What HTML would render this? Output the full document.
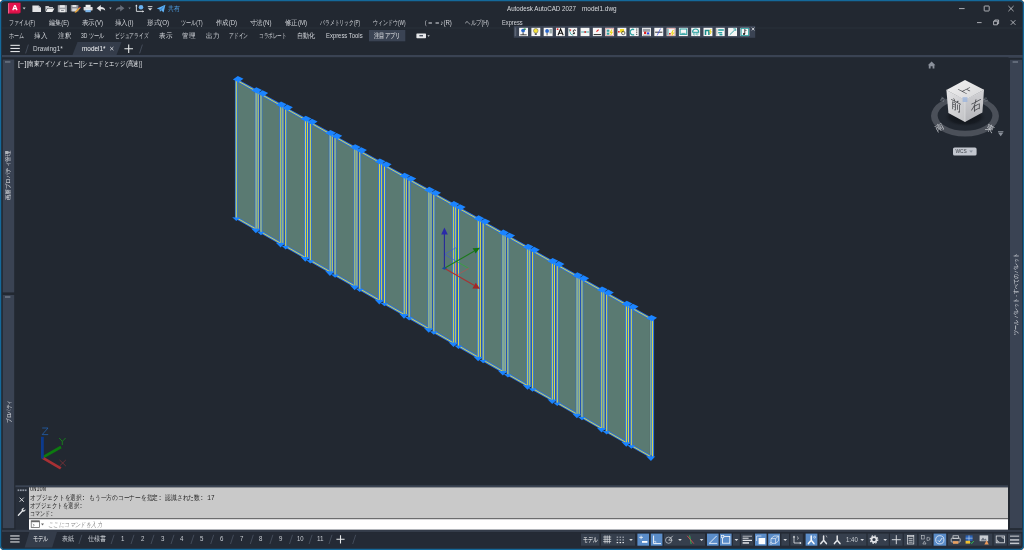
<!DOCTYPE html>
<html lang="ja"><head><meta charset="utf-8"><title>Autodesk AutoCAD 2027 - model1.dwg</title>
<style>
html,body{margin:0;padding:0;background:#fff;}
body{width:1024px;height:550px;position:relative;overflow:hidden;font-family:"Liberation Sans",sans-serif;}
#win{-webkit-font-smoothing:antialiased;position:absolute;left:0;top:0;width:1024px;height:550px;background:#222831;border-radius:4px;overflow:hidden;}
svg{position:absolute;left:0;top:0;}
#txt{position:absolute;left:0;top:0;width:1024px;height:550px;will-change:transform;}
.t{position:absolute;white-space:nowrap;color:#d4d7dc;font-size:6.6px;line-height:10px;height:10px;transform-origin:0 50%;}
#hist{position:absolute;left:29px;top:487.4px;width:979px;height:31px;overflow:hidden;}
.h{position:absolute;left:0.6px;white-space:pre;color:#1c1c1c;font-family:"Liberation Mono",monospace;font-size:7.4px;line-height:8.3px;height:8.3px;transform-origin:0 50%;}
.v{position:absolute;white-space:nowrap;color:#e4e6ea;font-size:6px;line-height:8px;height:8px;transform-origin:0 0;}
.c{position:absolute;white-space:nowrap;color:#3b3d42;font-size:9px;line-height:10px;height:10px;width:10px;text-align:center;transform-origin:50% 50%;}
</style></head><body><div id="win">

<svg width="1024" height="550" viewBox="0 0 1024 550">
<rect x="2" y="27.6" width="1020" height="0.8" fill="#2b323e"/>
<rect x="369" y="30" width="36.3" height="11.3" fill="#3a4353"/>
<polygon points="72.5,55 77.5,42 121.5,42 116.5,55" fill="#343c4a"/>
<line x1="25.6" y1="53.4" x2="28.4" y2="44.6" stroke="#4a5362" stroke-width="0.8"/>
<line x1="139.6" y1="53.4" x2="142.4" y2="44.6" stroke="#4a5362" stroke-width="0.8"/>
<rect x="2" y="55" width="1020.6" height="2.2" fill="#3a4353"/>
<rect x="1008.5" y="57" width="14" height="1" fill="#343c4a"/>
<rect x="2.8" y="59.6" width="11.4" height="232.8" fill="#3a4353"/>
<rect x="2.8" y="295" width="11.4" height="233.2" fill="#3a4353"/>
<rect x="5" y="61.2" width="5.4" height="1.5" fill="#6b7483"/>
<rect x="5" y="296.2" width="5.4" height="1.6" fill="#6b7483"/>
<rect x="1010" y="59.8" width="12" height="468.4" fill="#3a4353"/>
<rect x="1012.6" y="61.2" width="5.4" height="1.6" fill="#6b7483"/>
<rect x="15.4" y="485.3" width="992.6" height="2.2" fill="#3a4353"/>
<rect x="15.4" y="487.4" width="13.7" height="42.6" fill="#272e39"/>
<rect x="29" y="487.4" width="979" height="31" fill="#c9c9c9"/>
<rect x="29" y="518.3" width="979" height="1" fill="#6e6e6e"/>
<rect x="29" y="519.2" width="979" height="10.6" fill="#ffffff"/>
<rect x="2" y="529.8" width="1020.6" height="2.3" fill="#343c4a"/>
<rect x="2" y="532.1" width="1020.6" height="17" fill="#242a35"/>
<polygon points="24.6,547.4 29.4,532.1 57,532.1 52.2,547.4" fill="#343c4a"/>
<line x1="78.9" y1="544" x2="81.9" y2="534.8" stroke="#4a5362" stroke-width="0.8"/>
<line x1="111.1" y1="544" x2="114.1" y2="534.8" stroke="#4a5362" stroke-width="0.8"/>
<line x1="131" y1="544" x2="134" y2="534.8" stroke="#4a5362" stroke-width="0.8"/>
<line x1="151" y1="544" x2="154" y2="534.8" stroke="#4a5362" stroke-width="0.8"/>
<line x1="171" y1="544" x2="174" y2="534.8" stroke="#4a5362" stroke-width="0.8"/>
<line x1="190.9" y1="544" x2="193.9" y2="534.8" stroke="#4a5362" stroke-width="0.8"/>
<line x1="210.7" y1="544" x2="213.7" y2="534.8" stroke="#4a5362" stroke-width="0.8"/>
<line x1="230.5" y1="544" x2="233.5" y2="534.8" stroke="#4a5362" stroke-width="0.8"/>
<line x1="250.3" y1="544" x2="253.3" y2="534.8" stroke="#4a5362" stroke-width="0.8"/>
<line x1="269.9" y1="544" x2="272.9" y2="534.8" stroke="#4a5362" stroke-width="0.8"/>
<line x1="289.5" y1="544" x2="292.5" y2="534.8" stroke="#4a5362" stroke-width="0.8"/>
<line x1="309.1" y1="544" x2="312.1" y2="534.8" stroke="#4a5362" stroke-width="0.8"/>
<line x1="329" y1="544" x2="332" y2="534.8" stroke="#4a5362" stroke-width="0.8"/>
<line x1="352.7" y1="544" x2="355.7" y2="534.8" stroke="#4a5362" stroke-width="0.8"/>
</svg>
<svg width="1024" height="550" viewBox="0 0 1024 550">
<polygon points="236.30,80.50 254.80,91.17 254.80,228.47 236.30,217.80" fill="#5a7a72"/>
<polygon points="254.80,91.17 257.10,89.77 257.10,227.07 254.80,228.47" fill="#80a69d"/>
<polygon points="260.99,94.74 279.49,105.41 279.49,242.71 260.99,232.04" fill="#5a7a72"/>
<polygon points="279.49,105.41 281.79,104.01 281.79,241.31 279.49,242.71" fill="#80a69d"/>
<polygon points="285.68,108.98 304.18,119.65 304.18,256.95 285.68,246.28" fill="#5a7a72"/>
<polygon points="304.18,119.65 306.48,118.25 306.48,255.55 304.18,256.95" fill="#80a69d"/>
<polygon points="310.37,123.22 328.87,133.89 328.87,271.19 310.37,260.52" fill="#5a7a72"/>
<polygon points="328.87,133.89 331.17,132.49 331.17,269.79 328.87,271.19" fill="#80a69d"/>
<polygon points="335.06,137.45 353.56,148.12 353.56,285.42 335.06,274.75" fill="#5a7a72"/>
<polygon points="353.56,148.12 355.86,146.72 355.86,284.02 353.56,285.42" fill="#80a69d"/>
<polygon points="359.75,151.69 378.25,162.36 378.25,299.66 359.75,288.99" fill="#5a7a72"/>
<polygon points="378.25,162.36 380.55,160.96 380.55,298.26 378.25,299.66" fill="#80a69d"/>
<polygon points="384.44,165.93 402.94,176.60 402.94,313.90 384.44,303.23" fill="#5a7a72"/>
<polygon points="402.94,176.60 405.24,175.20 405.24,312.50 402.94,313.90" fill="#80a69d"/>
<polygon points="409.13,180.17 427.63,190.84 427.63,328.14 409.13,317.47" fill="#5a7a72"/>
<polygon points="427.63,190.84 429.93,189.44 429.93,326.74 427.63,328.14" fill="#80a69d"/>
<polygon points="433.82,194.41 452.32,205.08 452.32,342.38 433.82,331.71" fill="#5a7a72"/>
<polygon points="452.32,205.08 454.62,203.68 454.62,340.98 452.32,342.38" fill="#80a69d"/>
<polygon points="458.51,208.65 477.01,219.32 477.01,356.62 458.51,345.95" fill="#5a7a72"/>
<polygon points="477.01,219.32 479.31,217.92 479.31,355.22 477.01,356.62" fill="#80a69d"/>
<polygon points="483.20,222.89 501.70,233.56 501.70,370.86 483.20,360.19" fill="#5a7a72"/>
<polygon points="501.70,233.56 504.00,232.16 504.00,369.46 501.70,370.86" fill="#80a69d"/>
<polygon points="507.89,237.13 526.39,247.79 526.39,385.09 507.89,374.43" fill="#5a7a72"/>
<polygon points="526.39,247.79 528.69,246.39 528.69,383.69 526.39,385.09" fill="#80a69d"/>
<polygon points="532.58,251.36 551.08,262.03 551.08,399.33 532.58,388.66" fill="#5a7a72"/>
<polygon points="551.08,262.03 553.38,260.63 553.38,397.93 551.08,399.33" fill="#80a69d"/>
<polygon points="557.27,265.60 575.77,276.27 575.77,413.57 557.27,402.90" fill="#5a7a72"/>
<polygon points="575.77,276.27 578.07,274.87 578.07,412.17 575.77,413.57" fill="#80a69d"/>
<polygon points="581.96,279.84 600.46,290.51 600.46,427.81 581.96,417.14" fill="#5a7a72"/>
<polygon points="600.46,290.51 602.76,289.11 602.76,426.41 600.46,427.81" fill="#80a69d"/>
<polygon points="606.65,294.08 625.15,304.75 625.15,442.05 606.65,431.38" fill="#5a7a72"/>
<polygon points="625.15,304.75 627.45,303.35 627.45,440.65 625.15,442.05" fill="#80a69d"/>
<polygon points="631.34,308.32 649.84,318.99 649.84,456.29 631.34,445.62" fill="#5a7a72"/>
<polygon points="649.84,318.99 652.14,317.59 652.14,454.89 649.84,456.29" fill="#80a69d"/>
<g stroke="#2c74e6" stroke-width="2.7" fill="none" stroke-linecap="butt">
<path d="M236.00 79.90L257.10 91.50M236.00 217.60L255.30 228.57"/>
<path d="M236.30 80.00V218.40"/>
<path d="M256.10 90.57V229.67"/>
<path d="M258.20 91.47V230.47"/>
<path d="M260.69 94.14L281.79 105.73M260.69 231.84L279.99 242.81"/>
<path d="M260.99 94.24V232.64"/>
<path d="M280.79 104.81V243.91"/>
<path d="M282.89 105.71V244.71"/>
<path d="M285.38 108.38L306.48 119.97M285.38 246.08L304.68 257.05"/>
<path d="M285.68 108.48V246.88"/>
<path d="M305.48 119.05V258.15"/>
<path d="M307.58 119.95V258.95"/>
<path d="M310.07 122.62L331.17 134.21M310.07 260.32L329.37 271.29"/>
<path d="M310.37 122.72V261.12"/>
<path d="M330.17 133.29V272.39"/>
<path d="M332.27 134.19V273.19"/>
<path d="M334.76 136.85L355.86 148.45M334.76 274.55L354.06 285.52"/>
<path d="M335.06 136.95V275.35"/>
<path d="M354.86 147.52V286.62"/>
<path d="M356.96 148.42V287.42"/>
<path d="M359.45 151.09L380.55 162.69M359.45 288.79L378.75 299.76"/>
<path d="M359.75 151.19V289.59"/>
<path d="M379.55 161.76V300.86"/>
<path d="M381.65 162.66V301.66"/>
<path d="M384.14 165.33L405.24 176.93M384.14 303.03L403.44 314.00"/>
<path d="M384.44 165.43V303.83"/>
<path d="M404.24 176.00V315.10"/>
<path d="M406.34 176.90V315.90"/>
<path d="M408.83 179.57L429.93 191.17M408.83 317.27L428.13 328.24"/>
<path d="M409.13 179.67V318.07"/>
<path d="M428.93 190.24V329.34"/>
<path d="M431.03 191.14V330.14"/>
<path d="M433.52 193.81L454.62 205.41M433.52 331.51L452.82 342.48"/>
<path d="M433.82 193.91V332.31"/>
<path d="M453.62 204.48V343.58"/>
<path d="M455.72 205.38V344.38"/>
<path d="M458.21 208.05L479.31 219.64M458.21 345.75L477.51 356.72"/>
<path d="M458.51 208.15V346.55"/>
<path d="M478.31 218.72V357.82"/>
<path d="M480.41 219.62V358.62"/>
<path d="M482.90 222.29L504.00 233.88M482.90 359.99L502.20 370.96"/>
<path d="M483.20 222.39V360.79"/>
<path d="M503.00 232.96V372.06"/>
<path d="M505.10 233.86V372.86"/>
<path d="M507.59 236.53L528.69 248.12M507.59 374.23L526.89 385.19"/>
<path d="M507.89 236.63V375.03"/>
<path d="M527.69 247.19V386.29"/>
<path d="M529.79 248.09V387.09"/>
<path d="M532.28 250.76L553.38 262.36M532.28 388.46L551.58 399.43"/>
<path d="M532.58 250.86V389.26"/>
<path d="M552.38 261.43V400.53"/>
<path d="M554.48 262.33V401.33"/>
<path d="M556.97 265.00L578.07 276.60M556.97 402.70L576.27 413.67"/>
<path d="M557.27 265.10V403.50"/>
<path d="M577.07 275.67V414.77"/>
<path d="M579.17 276.57V415.57"/>
<path d="M581.66 279.24L602.76 290.84M581.66 416.94L600.96 427.91"/>
<path d="M581.96 279.34V417.74"/>
<path d="M601.76 289.91V429.01"/>
<path d="M603.86 290.81V429.81"/>
<path d="M606.35 293.48L627.45 305.08M606.35 431.18L625.65 442.15"/>
<path d="M606.65 293.58V431.98"/>
<path d="M626.45 304.15V443.25"/>
<path d="M628.55 305.05V444.05"/>
<path d="M631.04 307.72L652.14 319.31M631.04 445.42L650.34 456.39"/>
<path d="M631.34 307.82V446.22"/>
<path d="M652.74 319.31V457.01"/>
</g>
<g stroke="#2450b8" stroke-width="0.9" fill="none">
<path d="M259.40 93.37V230.47"/>
<path d="M284.09 107.61V244.71"/>
<path d="M308.78 121.85V258.95"/>
<path d="M333.47 136.09V273.19"/>
<path d="M358.16 150.32V287.42"/>
<path d="M382.85 164.56V301.66"/>
<path d="M407.54 178.80V315.90"/>
<path d="M432.23 193.04V330.14"/>
<path d="M456.92 207.28V344.38"/>
<path d="M481.61 221.52V358.62"/>
<path d="M506.30 235.76V372.86"/>
<path d="M530.99 249.99V387.09"/>
<path d="M555.68 264.23V401.33"/>
<path d="M580.37 278.47V415.57"/>
<path d="M605.06 292.71V429.81"/>
<path d="M629.75 306.95V444.05"/>
</g>
<g stroke="#d8da48" stroke-width="1.0" fill="none">
<path d="M236.30 80.00L256.60 91.50M236.30 217.70L255.40 228.67"/>
<path d="M236.30 80.80V217.80"/>
<path d="M256.10 91.77V229.27"/>
<path d="M258.20 92.57V230.27"/>
<path d="M260.99 94.24L281.29 105.73M260.99 231.94L280.09 242.91"/>
<path d="M260.99 95.04V232.04"/>
<path d="M280.79 106.01V243.51"/>
<path d="M282.89 106.81V244.51"/>
<path d="M285.68 108.48L305.98 119.97M285.68 246.18L304.78 257.15"/>
<path d="M285.68 109.28V246.28"/>
<path d="M305.48 120.25V257.75"/>
<path d="M307.58 121.05V258.75"/>
<path d="M310.37 122.72L330.67 134.21M310.37 260.42L329.47 271.39"/>
<path d="M310.37 123.52V260.52"/>
<path d="M330.17 134.49V271.99"/>
<path d="M332.27 135.29V272.99"/>
<path d="M335.06 136.95L355.36 148.45M335.06 274.65L354.16 285.62"/>
<path d="M335.06 137.75V274.75"/>
<path d="M354.86 148.72V286.22"/>
<path d="M356.96 149.52V287.22"/>
<path d="M359.75 151.19L380.05 162.69M359.75 288.89L378.85 299.86"/>
<path d="M359.75 151.99V288.99"/>
<path d="M379.55 162.96V300.46"/>
<path d="M381.65 163.76V301.46"/>
<path d="M384.44 165.43L404.74 176.93M384.44 303.13L403.54 314.10"/>
<path d="M384.44 166.23V303.23"/>
<path d="M404.24 177.20V314.70"/>
<path d="M406.34 178.00V315.70"/>
<path d="M409.13 179.67L429.43 191.17M409.13 317.37L428.23 328.34"/>
<path d="M409.13 180.47V317.47"/>
<path d="M428.93 191.44V328.94"/>
<path d="M431.03 192.24V329.94"/>
<path d="M433.82 193.91L454.12 205.41M433.82 331.61L452.92 342.58"/>
<path d="M433.82 194.71V331.71"/>
<path d="M453.62 205.68V343.18"/>
<path d="M455.72 206.48V344.18"/>
<path d="M458.51 208.15L478.81 219.64M458.51 345.85L477.61 356.82"/>
<path d="M458.51 208.95V345.95"/>
<path d="M478.31 219.92V357.42"/>
<path d="M480.41 220.72V358.42"/>
<path d="M483.20 222.39L503.50 233.88M483.20 360.09L502.30 371.06"/>
<path d="M483.20 223.19V360.19"/>
<path d="M503.00 234.16V371.66"/>
<path d="M505.10 234.96V372.66"/>
<path d="M507.89 236.63L528.19 248.12M507.89 374.33L526.99 385.29"/>
<path d="M507.89 237.43V374.43"/>
<path d="M527.69 248.39V385.89"/>
<path d="M529.79 249.19V386.89"/>
<path d="M532.58 250.86L552.88 262.36M532.58 388.56L551.68 399.53"/>
<path d="M532.58 251.66V388.66"/>
<path d="M552.38 262.63V400.13"/>
<path d="M554.48 263.43V401.13"/>
<path d="M557.27 265.10L577.57 276.60M557.27 402.80L576.37 413.77"/>
<path d="M557.27 265.90V402.90"/>
<path d="M577.07 276.87V414.37"/>
<path d="M579.17 277.67V415.37"/>
<path d="M581.96 279.34L602.26 290.84M581.96 417.04L601.06 428.01"/>
<path d="M581.96 280.14V417.14"/>
<path d="M601.76 291.11V428.61"/>
<path d="M603.86 291.91V429.61"/>
<path d="M606.65 293.58L626.95 305.08M606.65 431.28L625.75 442.25"/>
<path d="M606.65 294.38V431.38"/>
<path d="M626.45 305.35V442.85"/>
<path d="M628.55 306.15V443.85"/>
<path d="M631.34 307.82L651.64 319.31M631.34 445.52L650.44 456.49"/>
<path d="M631.34 308.62V445.62"/>
<path d="M652.44 319.91V456.61"/>
</g>
<g fill="#1b84ff">
<polygon points="232.90,79.40 237.80,76.00 243.50,78.80 238.60,82.20"/>
<polygon points="251.40,90.60 256.30,87.20 262.00,90.00 257.10,93.40"/>
<polygon points="232.20,217.30 240.00,217.70 236.30,220.90"/>
<polygon points="251.20,228.40 260.20,228.80 255.90,233.20"/>
<polygon points="257.59,93.64 262.49,90.24 268.19,93.04 263.29,96.44"/>
<polygon points="276.09,104.83 280.99,101.43 286.69,104.23 281.79,107.63"/>
<polygon points="256.89,231.54 264.69,231.94 260.99,235.14"/>
<polygon points="275.89,242.63 284.89,243.03 280.59,247.43"/>
<polygon points="282.28,107.88 287.18,104.48 292.88,107.28 287.98,110.68"/>
<polygon points="300.78,119.07 305.68,115.67 311.38,118.47 306.48,121.87"/>
<polygon points="281.58,245.78 289.38,246.18 285.68,249.38"/>
<polygon points="300.58,256.87 309.58,257.27 305.28,261.67"/>
<polygon points="306.97,122.12 311.87,118.72 317.57,121.52 312.67,124.92"/>
<polygon points="325.47,133.31 330.37,129.91 336.07,132.71 331.17,136.11"/>
<polygon points="306.27,260.02 314.07,260.42 310.37,263.62"/>
<polygon points="325.27,271.11 334.27,271.51 329.97,275.91"/>
<polygon points="331.66,136.35 336.56,132.95 342.26,135.75 337.36,139.15"/>
<polygon points="350.16,147.55 355.06,144.15 360.76,146.95 355.86,150.35"/>
<polygon points="330.96,274.25 338.76,274.65 335.06,277.85"/>
<polygon points="349.96,285.35 358.96,285.75 354.66,290.15"/>
<polygon points="356.35,150.59 361.25,147.19 366.95,149.99 362.05,153.39"/>
<polygon points="374.85,161.79 379.75,158.39 385.45,161.19 380.55,164.59"/>
<polygon points="355.65,288.49 363.45,288.89 359.75,292.09"/>
<polygon points="374.65,299.59 383.65,299.99 379.35,304.39"/>
<polygon points="381.04,164.83 385.94,161.43 391.64,164.23 386.74,167.63"/>
<polygon points="399.54,176.03 404.44,172.63 410.14,175.43 405.24,178.83"/>
<polygon points="380.34,302.73 388.14,303.13 384.44,306.33"/>
<polygon points="399.34,313.83 408.34,314.23 404.04,318.63"/>
<polygon points="405.73,179.07 410.63,175.67 416.33,178.47 411.43,181.87"/>
<polygon points="424.23,190.27 429.13,186.87 434.83,189.67 429.93,193.07"/>
<polygon points="405.03,316.97 412.83,317.37 409.13,320.57"/>
<polygon points="424.03,328.07 433.03,328.47 428.73,332.87"/>
<polygon points="430.42,193.31 435.32,189.91 441.02,192.71 436.12,196.11"/>
<polygon points="448.92,204.51 453.82,201.11 459.52,203.91 454.62,207.31"/>
<polygon points="429.72,331.21 437.52,331.61 433.82,334.81"/>
<polygon points="448.72,342.31 457.72,342.71 453.42,347.11"/>
<polygon points="455.11,207.55 460.01,204.15 465.71,206.95 460.81,210.35"/>
<polygon points="473.61,218.74 478.51,215.34 484.21,218.14 479.31,221.54"/>
<polygon points="454.41,345.45 462.21,345.85 458.51,349.05"/>
<polygon points="473.41,356.54 482.41,356.94 478.11,361.34"/>
<polygon points="479.80,221.79 484.70,218.39 490.40,221.19 485.50,224.59"/>
<polygon points="498.30,232.98 503.20,229.58 508.90,232.38 504.00,235.78"/>
<polygon points="479.10,359.69 486.90,360.09 483.20,363.29"/>
<polygon points="498.10,370.78 507.10,371.18 502.80,375.58"/>
<polygon points="504.49,236.03 509.39,232.63 515.09,235.43 510.19,238.83"/>
<polygon points="522.99,247.22 527.89,243.82 533.59,246.62 528.69,250.02"/>
<polygon points="503.79,373.93 511.59,374.33 507.89,377.53"/>
<polygon points="522.79,385.02 531.79,385.42 527.49,389.82"/>
<polygon points="529.18,250.26 534.08,246.86 539.78,249.66 534.88,253.06"/>
<polygon points="547.68,261.46 552.58,258.06 558.28,260.86 553.38,264.26"/>
<polygon points="528.48,388.16 536.28,388.56 532.58,391.76"/>
<polygon points="547.48,399.26 556.48,399.66 552.18,404.06"/>
<polygon points="553.87,264.50 558.77,261.10 564.47,263.90 559.57,267.30"/>
<polygon points="572.37,275.70 577.27,272.30 582.97,275.10 578.07,278.50"/>
<polygon points="553.17,402.40 560.97,402.80 557.27,406.00"/>
<polygon points="572.17,413.50 581.17,413.90 576.87,418.30"/>
<polygon points="578.56,278.74 583.46,275.34 589.16,278.14 584.26,281.54"/>
<polygon points="597.06,289.94 601.96,286.54 607.66,289.34 602.76,292.74"/>
<polygon points="577.86,416.64 585.66,417.04 581.96,420.24"/>
<polygon points="596.86,427.74 605.86,428.14 601.56,432.54"/>
<polygon points="603.25,292.98 608.15,289.58 613.85,292.38 608.95,295.78"/>
<polygon points="621.75,304.18 626.65,300.78 632.35,303.58 627.45,306.98"/>
<polygon points="602.55,430.88 610.35,431.28 606.65,434.48"/>
<polygon points="621.55,441.98 630.55,442.38 626.25,446.78"/>
<polygon points="627.94,307.22 632.84,303.82 638.54,306.62 633.64,310.02"/>
<polygon points="646.44,318.41 651.34,315.01 657.04,317.81 652.14,321.21"/>
<polygon points="627.24,445.12 635.04,445.52 631.34,448.72"/>
<polygon points="646.24,456.21 655.24,456.61 650.94,461.01"/>
</g>
</svg>
<svg width="1024" height="550" viewBox="0 0 1024 550">
<path d="M456.3 247.4L444.6 254.3L456.3 261.3" stroke="#3c55d8" stroke-width="0.6" fill="none"/>
<path d="M456.3 248V261.3L468.8 268.4" stroke="#25b525" stroke-width="0.6" fill="none"/>
<path d="M456.3 261.3V275M468.8 268.4L456.8 275.2" stroke="#c84848" stroke-width="0.6" fill="none"/>
<line x1="444.4" y1="268.3" x2="444.4" y2="234" stroke="#27279a" stroke-width="1.1"/>
<polygon points="444.4,227.6 441.2,234.6 447.8,234.6" fill="#2a2aa8"/>
<line x1="444.4" y1="268.3" x2="474" y2="251.3" stroke="#1c7a1c" stroke-width="1.1"/>
<polygon points="480,247.8 472.6,248.2 475.6,253.6" fill="#167016"/>
<line x1="444.4" y1="268.3" x2="474" y2="285.3" stroke="#a83232" stroke-width="1.1"/>
<polygon points="480,288.8 475.8,282.8 472.4,288.4" fill="#a02828"/>
<polygon points="441.8,268.3 444.4,266.9 447,268.3 444.4,269.8" fill="#1a4a9e"/>
</svg>
<svg width="1024" height="550" viewBox="0 0 1024 550">
<g stroke-width="2.8" stroke-linecap="butt">
<line x1="42.4" y1="457.6" x2="61" y2="447" stroke="#0d7a10"/>
<line x1="42.4" y1="457.6" x2="60.8" y2="468.4" stroke="#a83034"/>
<line x1="42.4" y1="458.6" x2="42.4" y2="436.8" stroke="#0c3a8c"/>
</g>
<g fill="none" stroke-width="0.7">
<path d="M42.2 428H48L42.2 434.6H48.2" stroke="#2268c0"/>
<path d="M59.2 438L62.3 441.4L65.6 438M62.3 441.4V445" stroke="#14a014"/>
<path d="M59.6 460L65.8 466M65.8 460L59.6 466" stroke="#8a3236"/>
</g></svg>
<svg width="1024" height="550" viewBox="0 0 1024 550">
<defs><radialGradient id="shd" cx="0.5" cy="0.5" r="0.5"><stop offset="0" stop-color="#0c0f14" stop-opacity="0.95"/><stop offset="0.7" stop-color="#12161c" stop-opacity="0.7"/><stop offset="1" stop-color="#222831" stop-opacity="0"/></radialGradient><linearGradient id="ctop" x1="0" y1="0" x2="1" y2="1"><stop offset="0" stop-color="#f2f2f2"/><stop offset="1" stop-color="#d6d6d8"/></linearGradient><linearGradient id="cl" x1="0" y1="0" x2="1" y2="1"><stop offset="0" stop-color="#e4e4e6"/><stop offset="1" stop-color="#c2c3c6"/></linearGradient><linearGradient id="cr" x1="0" y1="0" x2="0" y2="1"><stop offset="0" stop-color="#d2d2d5"/><stop offset="1" stop-color="#b4b5b9"/></linearGradient></defs>
<path d="M927.8 65.2L931.6 61.4L935.4 65.2H934.4V68.6H932.6V66.2H930.6V68.6H928.8V65.2Z" fill="#8b919b"/>
<path fill-rule="evenodd" fill="#4b5059" d="M931 116a34 20.5 0 1 0 68 0a34 20.5 0 1 0 -68 0ZM937.6 115.6a27.4 15.2 0 1 0 54.8 0a27.4 15.2 0 1 0 -54.8 0Z"/>
<ellipse cx="965" cy="117" rx="22" ry="10" fill="url(#shd)"/>
<polygon points="965,80 984,89.8 965,100 946.4,90" fill="url(#ctop)"/>
<polygon points="946.4,90 965,100 965,122 948.4,113" fill="url(#cl)"/>
<polygon points="984,89.8 965,100 965,122 982.4,112.6" fill="url(#cr)"/>
<path d="M965 100V122M946.4 90L965 100L984 89.8" stroke="#f4f4f4" stroke-width="0.5" fill="none" opacity="0.8"/>
<rect x="962.6" y="97.2" width="4.8" height="4.8" fill="#9fb6dc" opacity="0.85"/>
<path d="M998 132.6H1003.4L1000.7 136.2Z" fill="#8b919b"/><rect x="998" y="131" width="5.4" height="0.8" fill="#8b919b"/>
<rect x="953" y="147.4" width="23.6" height="8.2" rx="1.6" fill="#c3c7cf"/>
<path d="M969.2 150.4H973L971.1 152.8Z" fill="#8e95a1"/>
</svg>
<svg width="1024" height="550" viewBox="0 0 1024 550">
<g stroke="#d8dadf" stroke-width="0.75" fill="none">
<path d="M959 8.6H964.6"/>
<rect x="984.2" y="6" width="5" height="5" rx="0.6"/>
<path d="M1008.4 6L1013.6 11.2M1013.6 6L1008.4 11.2"/>
<path d="M977 22.6H981.6"/>
<path d="M993.6 21.2H997.4V24.8H993.6ZM994.8 21.2V20H998.6V23.6H997.4"/>
<path d="M1010.8 20.2L1015.4 24.8M1015.4 20.2L1010.8 24.8"/>
</g></svg>
<svg width="1024" height="550" viewBox="0 0 1024 550">
<path d="M8 3.6L9.4 2.8H20.4V12.6L19 13.8H8Z" fill="#b3123f"/>
<rect x="9.2" y="2.8" width="11.2" height="9.9" fill="#e4134d"/>
<path d="M8 3.6L9.2 2.8V12.7L8 13.8Z" fill="#f2608a"/>
<path d="M12.8 10.2L14.5 5.6H15.3L17 10.2M13.5 8.7H16.3" stroke="#fff" stroke-width="1.25" fill="none" stroke-linejoin="round"/>
<path d="M22.6 7.4H25.6L24.1 9.4Z" fill="#c8ccd2"/>
<path d="M32.4 5.4H38.6L41 7.8V11.9H32.4Z" fill="#e2e3e5"/><path d="M38.6 5.4V7.8H41Z" fill="#9a9ea6"/>
<path d="M45.4 6H48.6L49.4 7H53V8.2H47.2L45.4 11.4Z" fill="#c9cbcf"/><path d="M47.6 8.6H54.4L52.4 11.9H45.6Z" fill="#eceded"/>
<rect x="57.8" y="5.2" width="9.2" height="7" fill="#a2a5ab"/><rect x="59.8" y="5.2" width="5" height="2.4" fill="#e8e9eb"/><rect x="59.6" y="9.2" width="5.6" height="3" fill="#e8e9eb"/><rect x="61" y="10" width="2.8" height="1" fill="#8a8d93"/>
<rect x="70.8" y="5" width="7.6" height="6.4" fill="#8e9198"/><rect x="72.4" y="5" width="4" height="2" fill="#e0e1e4"/><rect x="72.2" y="8.4" width="4.6" height="3" fill="#d6d7da"/><path d="M75 11.4L79 7.4L80.2 8.6L76.2 12.6L74.6 12.8Z" fill="#e8a53a"/><path d="M79 7.4L79.8 6.6L81 7.8L80.2 8.6Z" fill="#d8434a"/>
<rect x="85.6" y="4.8" width="5" height="2.4" fill="#f0f0f1"/><rect x="83.6" y="7" width="9" height="3.4" rx="0.6" fill="#dcdde0"/><rect x="85.4" y="9.2" width="5.4" height="3" fill="#7cb6ea"/><rect x="85.4" y="9.2" width="5.4" height="0.8" fill="#f4f4f4"/>
<path d="M96.6 8.2L100.8 5V7.1C103.6 7.1 105.2 8.4 105.2 10.8C104.2 9.6 103 9.3 100.8 9.3V11.4Z" fill="#e4e5e8"/>
<path d="M109.2 7.6H111.6L110.4 9.2Z" fill="#aeb3bb"/>
<path d="M124.4 8.2L120.2 5V7.1C117.4 7.1 115.8 8.4 115.8 10.8C116.8 9.6 118 9.3 120.2 9.3V11.4Z" fill="#666d79"/>
<path d="M128.4 7.6H130.8L129.6 9.2Z" fill="#7b828d"/>
<path d="M136.4 5V11.4H143.4" stroke="#dfe1e4" stroke-width="0.9" fill="none"/><path d="M135.2 6.2L136.4 4.4L137.6 6.2ZM142.4 10.2L144.2 11.4L142.4 12.6Z" fill="#dfe1e4"/><circle cx="141" cy="7.2" r="2.3" fill="#69b1f0"/>
<rect x="147.8" y="6.2" width="4.6" height="0.9" fill="#dfe1e4"/><path d="M147.8 8.2H152.4L150.1 10.6Z" fill="#dfe1e4"/>
<path d="M156.8 8.6L165.4 4.8L163.6 12.4L161.2 10.2L160 12L159.6 9.6Z" fill="#5fb0f2"/><path d="M159.6 9.6L165.4 4.8L161.2 10.2" fill="#3c88d0"/>
<rect x="416.4" y="33.4" width="9.6" height="4.8" rx="0.6" fill="#e6e7ea"/><rect x="419.4" y="35" width="3.6" height="1.4" fill="#4b5361"/><path d="M427.4 35.2H429.8L428.6 36.8Z" fill="#c8ccd2"/>
<g fill="#e1e3e6"><rect x="10.4" y="44.8" width="9.4" height="1.1"/><rect x="10.4" y="47.9" width="9.4" height="1.1"/><rect x="10.4" y="51" width="9.4" height="1.1"/></g>
<path d="M110.2 47L113.4 50.2M113.4 47L110.2 50.2" stroke="#d0d3d8" stroke-width="0.95"/>
<path d="M124.4 48.7H133M128.7 44.4V53" stroke="#e8eaec" stroke-width="1.1"/>
</svg>
<svg width="1024" height="550" viewBox="0 0 1024 550">
<rect x="513.8" y="25.9" width="241.4" height="11.9" fill="#3a4353"/>
<rect x="514.6" y="27.4" width="1.6" height="8.8" fill="#5c6575"/>
<rect x="519.10" y="27.8" width="8.9" height="8.3" fill="#f6f6f6"/>
<rect x="531.39" y="27.8" width="8.9" height="8.3" fill="#f6f6f6"/>
<rect x="543.69" y="27.8" width="8.9" height="8.3" fill="#f6f6f6"/>
<rect x="555.98" y="27.8" width="8.9" height="8.3" fill="#f6f6f6"/>
<rect x="568.28" y="27.8" width="8.9" height="8.3" fill="#f6f6f6"/>
<rect x="580.57" y="27.8" width="8.9" height="8.3" fill="#f6f6f6"/>
<rect x="592.86" y="27.8" width="8.9" height="8.3" fill="#f6f6f6"/>
<rect x="605.16" y="27.8" width="8.9" height="8.3" fill="#f6f6f6"/>
<rect x="617.45" y="27.8" width="8.9" height="8.3" fill="#f6f6f6"/>
<rect x="629.75" y="27.8" width="8.9" height="8.3" fill="#f6f6f6"/>
<rect x="642.04" y="27.8" width="8.9" height="8.3" fill="#f6f6f6"/>
<rect x="654.33" y="27.8" width="8.9" height="8.3" fill="#f6f6f6"/>
<rect x="666.63" y="27.8" width="8.9" height="8.3" fill="#f6f6f6"/>
<rect x="678.92" y="27.8" width="8.9" height="8.3" fill="#f6f6f6"/>
<rect x="691.22" y="27.8" width="8.9" height="8.3" fill="#f6f6f6"/>
<rect x="703.51" y="27.8" width="8.9" height="8.3" fill="#f6f6f6"/>
<rect x="715.80" y="27.8" width="8.9" height="8.3" fill="#f6f6f6"/>
<rect x="728.10" y="27.8" width="8.9" height="8.3" fill="#f6f6f6"/>
<rect x="740.39" y="27.8" width="8.9" height="8.3" fill="#f6f6f6"/>
<circle cx="523.10" cy="30.6" r="1.9" fill="#2a66c8"/><path d="M523.10 32.4V35M520.30 34.8H526.70" stroke="#222" stroke-width="0.8"/><rect x="523.70" y="28.4" width="2" height="1.6" fill="#2e8b57"/>
<circle cx="535.79" cy="30.8" r="2.3" fill="#f4e23a" stroke="#555" stroke-width="0.5"/><rect x="534.79" y="33.2" width="2" height="1.8" fill="#555"/>
<circle cx="547.09" cy="31" r="1.9" fill="#2a66c8"/><path d="M547.09 33V35.4" stroke="#222" stroke-width="0.8"/><rect x="549.49" y="29" width="2.4" height="4.4" fill="#9aa"/>
<path d="M557.98 35.2L560.58 29L563.18 35.2M558.98 33.2H562.18" stroke="#111" stroke-width="1.1" fill="none"/><rect x="556.78" y="28.4" width="1.6" height="1.6" fill="#e02020"/>
<path d="M569.08 29L570.68 34L573.28 35.4" stroke="#2aa0a0" stroke-width="0.8" fill="none"/><path d="M575.68 30.4C573.88 29 572.48 31 573.68 32S575.08 34.6 572.88 33.4" stroke="#111" stroke-width="1" fill="none"/><rect x="569.68" y="29.4" width="1.4" height="1.4" fill="#e02020"/>
<path d="M581.17 32H588.97" stroke="#2aa0a0" stroke-width="0.9"/><rect x="584.37" y="31.2" width="1.6" height="1.6" fill="#e02020"/>
<path d="M593.66 34.6H601.06" stroke="#111" stroke-width="0.9"/><path d="M596.46 31.6L598.66 29.6" stroke="#e02020" stroke-width="1.2"/>
<rect x="605.86" y="28.6" width="7.6" height="6.8" fill="none" stroke="#d88a8a" stroke-width="0.6"/><rect x="606.76" y="29.6" width="2.6" height="2.2" fill="#3aa0a0"/><rect x="606.76" y="32.6" width="2.6" height="2.2" fill="#3aa0a0"/><path d="M611.96 29.4L610.36 32.4H612.16L610.56 35" stroke="#f0d820" stroke-width="1.1" fill="none"/>
<rect x="620.05" y="29" width="4" height="3.4" fill="#f0d820"/><circle cx="623.25" cy="33" r="1.7" fill="none" stroke="#333" stroke-width="0.7"/><rect x="618.05" y="31" width="1.6" height="1.6" fill="#e02020"/>
<path d="M634.15 29.6A2.8 2.8 0 1 0 634.15 34.6" stroke="#2aa0a0" stroke-width="1.3" fill="none"/><path d="M636.75 28.6V35.4" stroke="#333" stroke-width="1" stroke-dasharray="1 0.8"/>
<rect x="642.84" y="28.8" width="7.2" height="3" fill="#9aa0a8"/><rect x="644.04" y="31.6" width="2.2" height="2.4" fill="#e02020"/><rect x="647.04" y="32.4" width="2.2" height="2" fill="#2040e0"/><path d="M642.84 35.2H650.04" stroke="#888" stroke-width="0.8"/>
<path d="M655.13 32.2H662.33" stroke="#333" stroke-width="1"/><path d="M657.13 35.4L660.53 28.6" stroke="#3040e0" stroke-width="0.7"/>
<rect x="667.43" y="28.6" width="7.4" height="6.8" fill="none" stroke="#e09090" stroke-width="0.6"/><path d="M668.03 28.8V35.2" stroke="#2aa0a0" stroke-width="0.9"/><path d="M673.43 30L671.63 33H673.63L671.63 35.4" stroke="#f0d820" stroke-width="1.1" fill="none"/><rect x="669.03" y="33" width="1.6" height="1.6" fill="#e02020"/>
<rect x="680.12" y="29" width="6.6" height="5.4" fill="none" stroke="#2aa0a0" stroke-width="1"/><path d="M681.32 33.4H685.52" stroke="#2aa0a0" stroke-width="0.8"/>
<path d="M692.62 32A2.9 2.9 0 0 1 698.62 32" stroke="#2aa0a0" stroke-width="1.2" fill="none"/><rect x="692.22" y="31.8" width="7" height="1" fill="#2aa0a0"/><circle cx="694.22" cy="34" r="1" fill="none" stroke="#2aa0a0" stroke-width="0.6"/><circle cx="697.22" cy="34" r="1" fill="none" stroke="#2aa0a0" stroke-width="0.6"/>
<path d="M705.51 35V30.4H708.91V35" stroke="#1a8a8a" stroke-width="1.5" fill="none"/><path d="M711.11 29L709.71 31.6H711.31L710.11 34" stroke="#f0d820" stroke-width="1" fill="none"/>
<path d="M716.80 28.4V35.6" stroke="#999" stroke-width="0.8"/><rect x="718.20" y="29.2" width="5.6" height="1.6" fill="#2aa0a0"/><rect x="718.20" y="32" width="4" height="1.4" fill="#2aa0a0"/><rect x="719.40" y="34" width="3" height="1.4" fill="#2aa0a0"/>
<path d="M729.70 34.8L735.30 29.4" stroke="#2aa0a0" stroke-width="0.9"/><path d="M733.30 28.8H735.70V31" stroke="#2aa0a0" stroke-width="0.8" fill="none"/>
<rect x="741.19" y="28.4" width="7.4" height="7.2" fill="none" stroke="#2aa0a0" stroke-width="0.9"/><path d="M744.79 29.4V34M744.79 29.4L746.39 31" stroke="#111" stroke-width="0.8" fill="none"/><circle cx="743.99" cy="34" r="1" fill="#111"/>
<path d="M751.8 27.6L754.4 30.4M754.4 27.6L751.8 30.4" stroke="#e6e8ea" stroke-width="0.8"/>
</svg>
<svg width="1024" height="550" viewBox="0 0 1024 550">
<rect x="17.60" y="489.4" width="1.7" height="1.7" fill="#9097a3"/>
<rect x="20.00" y="489.4" width="1.7" height="1.7" fill="#9097a3"/>
<rect x="22.40" y="489.4" width="1.7" height="1.7" fill="#9097a3"/>
<rect x="24.80" y="489.4" width="1.7" height="1.7" fill="#9097a3"/>
<path d="M19.6 497.6L23.8 501.8M23.8 497.6L19.6 501.8" stroke="#e2e4e7" stroke-width="0.9"/>
<path d="M18.4 515.2L22.6 510.8" stroke="#e2e4e7" stroke-width="1.4" stroke-linecap="round"/><path d="M21.6 510.2C21.4 508.6 23 507.4 24.4 507.8L23 509.4L23.8 510.4L25.6 509.2C25.8 510.8 24.4 512 22.8 511.6Z" fill="#e2e4e7"/>
<rect x="31.2" y="520.8" width="8.2" height="6.6" fill="#fff" stroke="#555" stroke-width="0.7"/><rect x="31.2" y="520.8" width="8.2" height="1.4" fill="#666"/><path d="M32.8 524L34.4 525.2L32.8 526.4" stroke="#444" stroke-width="0.5" fill="none"/>
<path d="M41 523.6H44L42.5 525.4Z" fill="#666"/>
</svg>
<svg width="1024" height="550" viewBox="0 0 1024 550">
<rect x="581.00" y="533.60" width="18.40" height="12.10" fill="#363f4d"/>
<rect x="601.00" y="533.60" width="34.00" height="12.10" fill="#363f4d"/>
<rect x="664.00" y="533.60" width="41.00" height="12.10" fill="#363f4d"/>
<rect x="733.00" y="533.60" width="6.80" height="12.10" fill="#363f4d"/>
<rect x="741.00" y="533.60" width="12.40" height="12.10" fill="#363f4d"/>
<rect x="781.40" y="533.60" width="7.60" height="12.10" fill="#363f4d"/>
<rect x="790.40" y="533.60" width="12.40" height="12.10" fill="#363f4d"/>
<rect x="818.80" y="533.60" width="47.60" height="12.10" fill="#363f4d"/>
<rect x="867.60" y="533.60" width="21.20" height="12.10" fill="#363f4d"/>
<rect x="890.00" y="533.60" width="12.60" height="12.10" fill="#363f4d"/>
<rect x="903.80" y="533.60" width="13.40" height="12.10" fill="#363f4d"/>
<rect x="918.60" y="533.60" width="13.20" height="12.10" fill="#363f4d"/>
<rect x="947.80" y="533.60" width="44.60" height="12.10" fill="#363f4d"/>
<rect x="993.60" y="533.60" width="13.20" height="12.10" fill="#363f4d"/>
<rect x="1008.00" y="533.60" width="13.30" height="12.10" fill="#363f4d"/>
<rect x="637.40" y="533.60" width="11.60" height="12.10" fill="#5b8dc9"/>
<rect x="650.80" y="533.60" width="11.60" height="12.10" fill="#5b8dc9"/>
<rect x="707.00" y="533.60" width="11.60" height="12.10" fill="#5b8dc9"/>
<rect x="720.00" y="533.60" width="11.60" height="12.10" fill="#5b8dc9"/>
<rect x="755.00" y="533.60" width="11.60" height="12.10" fill="#5b8dc9"/>
<rect x="768.20" y="533.60" width="11.80" height="12.10" fill="#5b8dc9"/>
<rect x="805.60" y="533.60" width="11.80" height="12.10" fill="#5b8dc9"/>
<rect x="933.60" y="533.60" width="12.60" height="12.10" fill="#5b8dc9"/>
<g fill="#e1e3e6"><rect x="10.2" y="535.4" width="9.4" height="1.1"/><rect x="10.2" y="538.4" width="9.4" height="1.1"/><rect x="10.2" y="541.4" width="9.4" height="1.1"/></g>
<path d="M336.4 539.3H344.6M340.5 535.2V543.4" stroke="#e8eaec" stroke-width="1.1"/>
<path d="M605 535.4V543.4M607.2 535.4V543.4M609.4 535.4V543.4M603.2 537H611.2M603.2 539.3H611.2M603.2 541.6H611.2" stroke="#e4e6e9" stroke-width="0.7"/>
<rect x="616.65" y="536.65" width="1.5" height="1.1" fill="#aeb4bd"/>
<rect x="616.65" y="539.35" width="1.5" height="1.1" fill="#aeb4bd"/>
<rect x="616.65" y="542.05" width="1.5" height="1.1" fill="#f0f1f3"/>
<rect x="619.55" y="536.65" width="1.5" height="1.1" fill="#aeb4bd"/>
<rect x="619.55" y="539.35" width="1.5" height="1.1" fill="#aeb4bd"/>
<rect x="619.55" y="542.05" width="1.5" height="1.1" fill="#f0f1f3"/>
<rect x="622.45" y="536.65" width="1.5" height="1.1" fill="#aeb4bd"/>
<rect x="622.45" y="539.35" width="1.5" height="1.1" fill="#aeb4bd"/>
<rect x="622.45" y="542.05" width="1.5" height="1.1" fill="#f0f1f3"/>
<path d="M629.10 539.00H632.90L631.00 541.10Z" fill="#d8dade"/>
<path d="M639.2 537.4H643M641.1 535.6V539.2" stroke="#fff" stroke-width="0.7"/><rect x="642" y="541" width="5.4" height="1.8" fill="#fff"/>
<path d="M653.6 535.6V543.6H661" stroke="#fff" stroke-width="0.9" fill="none"/><path d="M653.6 541.4H655.8V543.6" stroke="#fff" stroke-width="0.5" fill="none"/>
<circle cx="668.6" cy="540.2" r="3.1" fill="none" stroke="#cfd3d8" stroke-width="0.7"/><path d="M668.6 540.2H672.4M668.6 540.2L672.8 535.8" stroke="#e4e6e9" stroke-width="0.7"/>
<path d="M678.10 539.00H681.90L680.00 541.10Z" fill="#d8dade"/>
<path d="M689.6 535.4L691.2 544" stroke="#2fba55" stroke-width="0.9" fill="none"/><path d="M687.2 535.8L693.8 543.6" stroke="#d85050" stroke-width="0.9"/>
<path d="M699.70 539.00H703.50L701.60 541.10Z" fill="#d8dade"/>
<path d="M709 543.4H717.2M709.6 543L716.6 536" stroke="#fff" stroke-width="0.8" fill="none"/>
<rect x="722.6" y="536.6" width="7.2" height="6.6" fill="none" stroke="#fff" stroke-width="0.8"/><rect x="721.4" y="535.4" width="2.4" height="2.4" fill="#5b8dc9" stroke="#fff" stroke-width="0.6"/>
<path d="M734.50 539.00H738.30L736.40 541.10Z" fill="#d8dade"/>
<g fill="#e4e6e9"><rect x="742.6" y="535.8" width="9.4" height="0.7"/><rect x="742.6" y="537.7" width="6" height="1"/><rect x="742.6" y="539.8" width="9.4" height="1.2"/><rect x="742.6" y="542.2" width="6.4" height="1.5"/></g>
<rect x="758.6" y="538" width="6.6" height="6.2" fill="#fff"/><path d="M756.6 536V541M756.6 536H761.4" stroke="#e6eefa" stroke-width="0.7" fill="none"/>
<path d="M771 538.6L774 536H778.6V540.8L775.6 543.4H771ZM771 538.6H775.6V543.4M775.6 538.6L778.6 536" stroke="#fff" stroke-width="0.6" fill="none"/><circle cx="771" cy="543.4" r="1" fill="#5b8dc9" stroke="#fff" stroke-width="0.5"/>
<path d="M783.30 539.00H787.10L785.20 541.10Z" fill="#d8dade"/>
<path d="M794 536.4V543H800.8" stroke="#e4e6e9" stroke-width="0.8" fill="none"/><path d="M792.8 537.6L794 535.6L795.2 537.6ZM799.8 541.8L801.6 543L799.8 544.2Z" fill="#e4e6e9"/><path d="M797.4 536.4L798.4 538.6L797 539.4" stroke="#e4e6e9" stroke-width="0.6" fill="none"/>
<path d="M811.20 536V540.4M811.20 540.2L808.40 543.6M811.20 540.2L814.00 543.6" stroke="#fff" stroke-width="1.5" fill="none" stroke-linecap="round"/><circle cx="814.6" cy="537.2" r="1" fill="none" stroke="#fff" stroke-width="0.5"/>
<path d="M823.60 536V540.4M823.60 540.2L820.80 543.6M823.60 540.2L826.40 543.6" stroke="#e4e6e9" stroke-width="1.5" fill="none" stroke-linecap="round"/><path d="M826 535.4L827 537.4" stroke="#e4e6e9" stroke-width="0.6"/>
<path d="M837.20 536V540.4M837.20 540.2L834.40 543.6M837.20 540.2L840.00 543.6" stroke="#e4e6e9" stroke-width="1.5" fill="none" stroke-linecap="round"/>
<path d="M860.30 539.00H864.10L862.20 541.10Z" fill="#d8dade"/>
<circle cx="874" cy="539.6" r="2.5" fill="none" stroke="#e4e6e9" stroke-width="1.7"/><circle cx="874" cy="539.6" r="3.8" fill="none" stroke="#e4e6e9" stroke-width="1.2" stroke-dasharray="1.5 1.48"/>
<path d="M883.30 539.00H887.10L885.20 541.10Z" fill="#d8dade"/>
<path d="M891.8 539.7H900.8M896.3 535.2V544.2" stroke="#e4e6e9" stroke-width="0.9"/>
<rect x="907.4" y="535.4" width="6.4" height="8.6" fill="none" stroke="#e4e6e9" stroke-width="0.7"/><path d="M907.4 536.6H913.8M908.6 538.6H912.6M908.6 540.4H912.6M908.6 542.2H912.6" stroke="#e4e6e9" stroke-width="0.7"/>
<rect x="921.6" y="535.4" width="2.6" height="3.6" fill="none" stroke="#c6cad0" stroke-width="0.6"/><path d="M927 537.4H928.4A1.4 1.4 0 0 1 928.4 540.4H927Z" fill="none" stroke="#c6cad0" stroke-width="0.6"/><path d="M922.8 544L924.4 541.2L926 544Z" fill="none" stroke="#c6cad0" stroke-width="0.6"/>
<circle cx="939.8" cy="539.8" r="4.1" fill="none" stroke="#e8effa" stroke-width="0.8"/><path d="M938 540.4L939.4 541.8L942.2 538" stroke="#fff" stroke-width="0.8" fill="none"/>
<rect x="953" y="535.8" width="5.4" height="2.6" fill="none" stroke="#e4e6e9" stroke-width="0.7"/><rect x="951.2" y="538.2" width="9" height="3.8" rx="0.6" fill="none" stroke="#e4e6e9" stroke-width="0.7"/><rect x="953" y="541.2" width="5.4" height="2.6" fill="#e8a060"/>
<rect x="965.6" y="535.4" width="7" height="5.4" fill="#2a63b8"/><path d="M969 535.4V540.8M965.6 538.2H972.6" stroke="#cfe0f5" stroke-width="0.6"/><rect x="965.6" y="540.8" width="4.4" height="2.8" fill="#f0c030"/><path d="M970.4 542.2L971.6 543.6L973.8 541" stroke="#30c050" stroke-width="0.9" fill="none"/>
<rect x="979.6" y="535.4" width="8.6" height="5.8" fill="#c9cdd3"/><path d="M980.6 540.4L983 537.6L984.6 539.4L985.6 538.4L986.8 540.4Z" fill="#6c7480"/><path d="M984.4 544.4L986.6 540.2L988.8 544.4Z" fill="#ee9a5a"/>
<rect x="996.2" y="536" width="8.2" height="6.8" fill="none" stroke="#e4e6e9" stroke-width="0.8"/><path d="M1001.4 537.2H1003.2V539M999.2 541.6H997.4V539.8" stroke="#e4e6e9" stroke-width="0.7" fill="none"/>
<g fill="#c4c8ce"><rect x="1010" y="535.6" width="9.2" height="1.1"/><rect x="1010" y="539.2" width="9.2" height="1.5"/><rect x="1010" y="542.6" width="9.2" height="1.5"/></g>
</svg>
<div id="txt">
<div class="t" id="t0" style="left:506.7px;top:4.0px;color:#d9dbdf;transform:scaleX(0.944);">Autodesk AutoCAD 2027</div>
<div class="t" id="t1" style="left:581.8px;top:4.0px;color:#d9dbdf;transform:scaleX(0.973);">model1.dwg</div>
<div class="t" id="t2" style="left:167.9px;top:3.8px;color:#4d9fe6;transform:scaleX(0.850);">共有</div>
<div class="t" id="t3" style="left:9.0px;top:18.1px;transform:scaleX(0.714);">ファイル(F)</div>
<div class="t" id="t4" style="left:48.5px;top:18.1px;transform:scaleX(0.877);">編集(E)</div>
<div class="t" id="t5" style="left:81.5px;top:18.1px;transform:scaleX(0.921);">表示(V)</div>
<div class="t" id="t6" style="left:115.0px;top:18.1px;transform:scaleX(0.914);">挿入(I)</div>
<div class="t" id="t7" style="left:146.5px;top:18.1px;transform:scaleX(0.935);">形式(O)</div>
<div class="t" id="t8" style="left:181.0px;top:18.1px;transform:scaleX(0.731);">ツール(T)</div>
<div class="t" id="t9" style="left:216.0px;top:18.1px;transform:scaleX(0.907);">作成(D)</div>
<div class="t" id="t10" style="left:250.0px;top:18.1px;transform:scaleX(0.928);">寸法(N)</div>
<div class="t" id="t11" style="left:285.0px;top:18.1px;transform:scaleX(0.921);">修正(M)</div>
<div class="t" id="t12" style="left:320.0px;top:18.1px;transform:scaleX(0.692);">パラメトリック(P)</div>
<div class="t" id="t13" style="left:372.5px;top:18.1px;transform:scaleX(0.712);">ウィンドウ(W)</div>
<div class="t" id="t14" style="left:421.0px;top:18.1px;transform:scaleX(0.921);">（＝＝♪(R)</div>
<div class="t" id="t15" style="left:464.8px;top:18.1px;transform:scaleX(0.789);">ヘルプ(H)</div>
<div class="t" id="t16" style="left:502.0px;top:18.1px;transform:scaleX(0.869);">Express</div>
<div class="t" id="t17" style="left:9.0px;top:31.2px;transform:scaleX(0.714);">ホーム</div>
<div class="t" id="t18" style="left:34.0px;top:31.2px;transform:scaleX(0.929);">挿入</div>
<div class="t" id="t19" style="left:57.5px;top:31.2px;transform:scaleX(0.929);">注釈</div>
<div class="t" id="t20" style="left:81.0px;top:31.2px;transform:scaleX(0.752);">3D ツール</div>
<div class="t" id="t21" style="left:115.0px;top:31.2px;transform:scaleX(0.684);">ビジュアライズ</div>
<div class="t" id="t22" style="left:158.5px;top:31.2px;transform:scaleX(0.929);">表示</div>
<div class="t" id="t23" style="left:182.0px;top:31.2px;transform:scaleX(0.929);">管理</div>
<div class="t" id="t24" style="left:205.5px;top:31.2px;transform:scaleX(0.929);">出力</div>
<div class="t" id="t25" style="left:229.0px;top:31.2px;transform:scaleX(0.679);">アドイン</div>
<div class="t" id="t26" style="left:258.5px;top:31.2px;transform:scaleX(0.655);">コラボレート</div>
<div class="t" id="t27" style="left:296.6px;top:31.2px;transform:scaleX(0.886);">自動化</div>
<div class="t" id="t28" style="left:326.4px;top:31.2px;transform:scaleX(0.894);">Express Tools</div>
<div class="t" id="t29" style="left:374.0px;top:31.0px;color:#f2f3f5;transform:scaleX(0.757);">注目アプリ</div>
<div class="t" id="t30" style="left:33.0px;top:43.6px;font-size:6.9px;color:#cdd1d7;transform:scaleX(0.937);">Drawing1*</div>
<div class="t" id="t31" style="left:81.9px;top:43.6px;font-size:6.9px;color:#f4f5f6;transform:scaleX(0.929);">model1*</div>
<div class="t" id="t32" style="left:18.1px;top:58.8px;color:#e6e8eb;font-size:6.8px;transform:scaleX(1.097);">[−]</div>
<div class="t" id="t33" style="left:26.8px;top:58.8px;color:#e6e8eb;font-size:6.8px;transform:scaleX(0.779);">[南東アイソメ ビュー]</div>
<div class="t" id="t34" style="left:80.5px;top:58.8px;color:#e6e8eb;font-size:6.8px;transform:scaleX(0.759);">[シェードとエッジ (高速)]</div>
<div class="t" id="t35" style="left:33.3px;top:534.3px;color:#f6f7f8;font-size:6.8px;transform:scaleX(0.729);">モデル</div>
<div class="t" id="t36" style="left:62.0px;top:534.3px;color:#c9cdd3;font-size:6.8px;transform:scaleX(0.843);">表紙</div>
<div class="t" id="t37" style="left:87.5px;top:534.3px;color:#c9cdd3;font-size:6.8px;transform:scaleX(0.876);">仕様書</div>
<div class="t" id="t38" style="left:121.1px;top:534.3px;color:#c9cdd3;font-size:6.6px;transform:scaleX(0.926);">1</div>
<div class="t" id="t39" style="left:140.6px;top:534.3px;color:#c9cdd3;font-size:6.6px;transform:scaleX(0.926);">2</div>
<div class="t" id="t40" style="left:160.6px;top:534.3px;color:#c9cdd3;font-size:6.6px;transform:scaleX(0.926);">3</div>
<div class="t" id="t41" style="left:180.3px;top:534.3px;color:#c9cdd3;font-size:6.6px;transform:scaleX(0.926);">4</div>
<div class="t" id="t42" style="left:200.1px;top:534.3px;color:#c9cdd3;font-size:6.6px;transform:scaleX(0.926);">5</div>
<div class="t" id="t43" style="left:219.8px;top:534.3px;color:#c9cdd3;font-size:6.6px;transform:scaleX(0.926);">6</div>
<div class="t" id="t44" style="left:239.6px;top:534.3px;color:#c9cdd3;font-size:6.6px;transform:scaleX(0.926);">7</div>
<div class="t" id="t45" style="left:259.3px;top:534.3px;color:#c9cdd3;font-size:6.6px;transform:scaleX(0.926);">8</div>
<div class="t" id="t46" style="left:278.9px;top:534.3px;color:#c9cdd3;font-size:6.6px;transform:scaleX(0.926);">9</div>
<div class="t" id="t47" style="left:297.2px;top:534.3px;color:#c9cdd3;font-size:6.6px;transform:scaleX(0.899);">10</div>
<div class="t" id="t48" style="left:316.7px;top:534.3px;color:#c9cdd3;font-size:6.6px;transform:scaleX(0.962);">11</div>
<div class="t" id="t49" style="left:583.0px;top:534.7px;color:#ffffff;font-size:6.8px;transform:scaleX(0.695);">モデル</div>
<div class="t" id="t50" style="left:846.2px;top:534.6px;color:#c9cdd3;font-size:6.4px;transform:scaleX(0.948);">1:40</div>
<div class="t" id="t51" style="left:48.0px;top:519.7px;color:#8a8a8a;font-style:italic;font-size:6.8px;transform:scaleX(0.771);">ここにコマンドを入力</div>
<div class="t" id="t52" style="left:955.4px;top:146.5px;color:#3d4148;font-size:4.8px;">WCS</div>
<div id="hist">
<div class="h" id="h0" style="top:-1.95px;transform:scaleX(0.721);">UNION</div>
<div class="h" id="h1" style="top:6.25px;transform:scaleX(0.822);">オブジェクトを選択: もう一方のコーナーを指定: 認識された数: 17</div>
<div class="h" id="h2" style="top:14.55px;transform:scaleX(0.783);">オブジェクトを選択:</div>
<div class="h" id="h3" style="top:22.85px;transform:scaleX(0.721);">コマンド:</div>
</div>
<div class="v" id="v0" style="left:4.4px;top:200.4px;transform:rotate(-90deg) scaleX(0.915);">画層プロパティ管理</div>
<div class="v" id="v1" style="left:4.6px;top:422.5px;transform:rotate(-90deg) scaleX(0.763);">プロパティ</div>
<div class="v" id="v2" style="left:1012.2px;top:335.0px;transform:rotate(-90deg) scaleX(0.843);">ツール パレット - すべてのパレット</div>
<div class="c" style="left:960px;top:84.8px;transform:matrix(0.92,0.48,-0.92,0.48,0,0);font-size:10px;">上</div>
<div class="c" style="left:950.4px;top:100px;transform:matrix(0.9,0.47,0,1.1,0,0);font-size:11.5px;">前</div>
<div class="c" style="left:969.6px;top:99.6px;transform:matrix(0.9,-0.47,0,1.1,0,0);font-size:11.5px;">右</div>
<div class="c" style="left:935px;top:122px;color:#c9ccd1;font-size:8.6px;transform:rotate(-28deg);">南</div>
<div class="c" style="left:985px;top:122.6px;color:#c9ccd1;font-size:8.6px;transform:rotate(28deg);">東</div>
<div class="c" style="left:937.6px;top:95.2px;color:#8a9099;font-size:4.6px;transform:rotate(24deg);">西</div>
<div class="c" style="left:981.4px;top:95.2px;color:#8a9099;font-size:4.6px;transform:rotate(-24deg);">北</div>
</div>
<svg width="1024" height="550" viewBox="0 0 1024 550"><rect x="0.6" y="0.6" width="1022.8" height="548.8" rx="3.6" fill="none" stroke="#14699b" stroke-width="1.25"/></svg>
</div></body></html>
